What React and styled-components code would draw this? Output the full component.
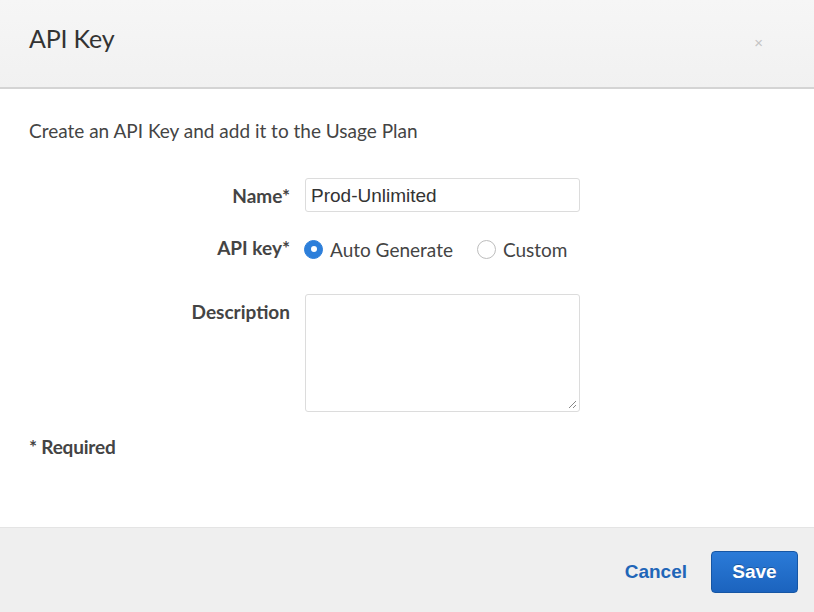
import React from "react";
import styled, { createGlobalStyle } from "styled-components";

const GlobalStyle = createGlobalStyle`
  html, body {
    margin: 0;
    padding: 0;
    background: #ffffff;
  }
  body {
    font-family: Lato, "Liberation Sans", sans-serif;
  }
`;

const Modal = styled.div`
  width: 814px;
  height: 612px;
  display: flex;
  flex-direction: column;
  background: #fff;
  overflow: hidden;
`;

const Header = styled.div`
  height: 89px;
  flex: none;
  display: flex;
  align-items: center;
  justify-content: space-between;
  padding: 0 51px 0 29px;
  background: linear-gradient(#f6f6f6, #f1f1f1);
  border-bottom: 2px solid #d4d4d4;
  box-sizing: border-box;
`;

const Title = styled.h2`
  margin: 0 0 12px;
  font-family: Lato, sans-serif;
  font-weight: 400;
  font-size: 25px;
  letter-spacing: -0.2px;
  color: #333;
`;

const Close = styled.span`
  font-family: "Liberation Sans", sans-serif;
  font-size: 15px;
  color: #c4c4c4;
  margin-bottom: 3px;
`;

const Body = styled.div`
  flex: 1;
  padding: 30px 29px 0;
  box-sizing: border-box;
`;

const Intro = styled.p`
  margin: 0;
  font-size: 19px;
  color: #444;
  line-height: 24px;
`;

const Form = styled.div`
  display: grid;
  grid-template-columns: 261px 275px;
  column-gap: 15px;
  row-gap: 20px;
  margin-top: 35px;
`;

const Label = styled.label`
  justify-self: end;
  align-self: start;
  margin-top: ${p => p.offset}px;
  font-weight: 700;
  font-size: 19px;
  line-height: 24px;
  color: #444;
`;

const Input = styled.div`
  height: 34px;
  box-sizing: border-box;
  border: 1px solid #dcdcdc;
  border-radius: 3px;
  padding: 1px 5px 0;
  display: flex;
  align-items: center;
  font-family: "Liberation Sans", Arial, sans-serif;
  font-size: 19px;
  color: #333;
`;

const RadioRow = styled.div`
  display: flex;
  align-items: center;
  height: 34px;
  margin-bottom: 8px;
  margin-left: -1px;
  gap: 24px;
`;

const RadioOption = styled.span`
  display: flex;
  align-items: center;
  gap: 7px;
  font-size: 19px;
  color: #444;
`;

const RadioDot = styled.span`
  width: 19px;
  height: 19px;
  box-sizing: border-box;
  border-radius: 50%;
  display: inline-flex;
  align-items: center;
  justify-content: center;
  background: ${p => (p.checked ? "#2d7fda" : "#fff")};
  border: 1px solid ${p => (p.checked ? "#2d7fda" : "#bdbdbd")};
  &::after {
    content: "";
    width: 6px;
    height: 6px;
    border-radius: 50%;
    background: #fff;
    display: ${p => (p.checked ? "block" : "none")};
  }
`;

const TextArea = styled.div`
  position: relative;
  height: 118px;
  box-sizing: border-box;
  border: 1px solid #dcdcdc;
  border-radius: 3px;
`;

const Grip = styled.svg`
  position: absolute;
  right: 2px;
  bottom: 2px;
`;

const Required = styled.p`
  margin: 23px 0 0;
  font-weight: 700;
  font-size: 19px;
  line-height: 24px;
  letter-spacing: -0.2px;
  color: #444;
`;

const Footer = styled.div`
  height: 85px;
  flex: none;
  display: flex;
  align-items: center;
  justify-content: flex-end;
  gap: 24px;
  padding: 3px 16px 0 0;
  background: #efefef;
  border-top: 1px solid #e4e4e4;
  box-sizing: border-box;
`;

const LinkButton = styled.button`
  background: none;
  border: none;
  padding: 0;
  font-family: "Liberation Sans", Arial, sans-serif;
  font-weight: 700;
  font-size: 19px;
  color: #1f66b8;
`;

const PrimaryButton = styled.button`
  width: 87px;
  height: 42px;
  border-radius: 4px;
  border: 1px solid #1656a4;
  background: linear-gradient(#2b7bd8, #1b63be);
  font-family: "Liberation Sans", Arial, sans-serif;
  font-weight: 700;
  font-size: 19px;
  color: #fff;
  text-shadow: 0 -1px 0 rgba(0, 0, 0, 0.25);
`;

export default function App() {
  return (
    <Modal>
      <GlobalStyle />
      <Header>
        <Title>API Key</Title>
        <Close>×</Close>
      </Header>
      <Body>
        <Intro>Create an API Key and add it to the Usage Plan</Intro>
        <Form>
          <Label offset={6}>Name*</Label>
          <Input>Prod-Unlimited</Input>
          <Label offset={4}>API key*</Label>
          <RadioRow>
            <RadioOption>
              <RadioDot checked />
              Auto Generate
            </RadioOption>
            <RadioOption>
              <RadioDot />
              Custom
            </RadioOption>
          </RadioRow>
          <Label offset={6}>Description</Label>
          <TextArea>
            <Grip width="9" height="9" viewBox="0 0 9 9">
              <path d="M8 1 L1 8 M8 5 L5 8" stroke="#888" strokeWidth="1" />
            </Grip>
          </TextArea>
        </Form>
        <Required>* Required</Required>
      </Body>
      <Footer>
        <LinkButton>Cancel</LinkButton>
        <PrimaryButton>Save</PrimaryButton>
      </Footer>
    </Modal>
  );
}
